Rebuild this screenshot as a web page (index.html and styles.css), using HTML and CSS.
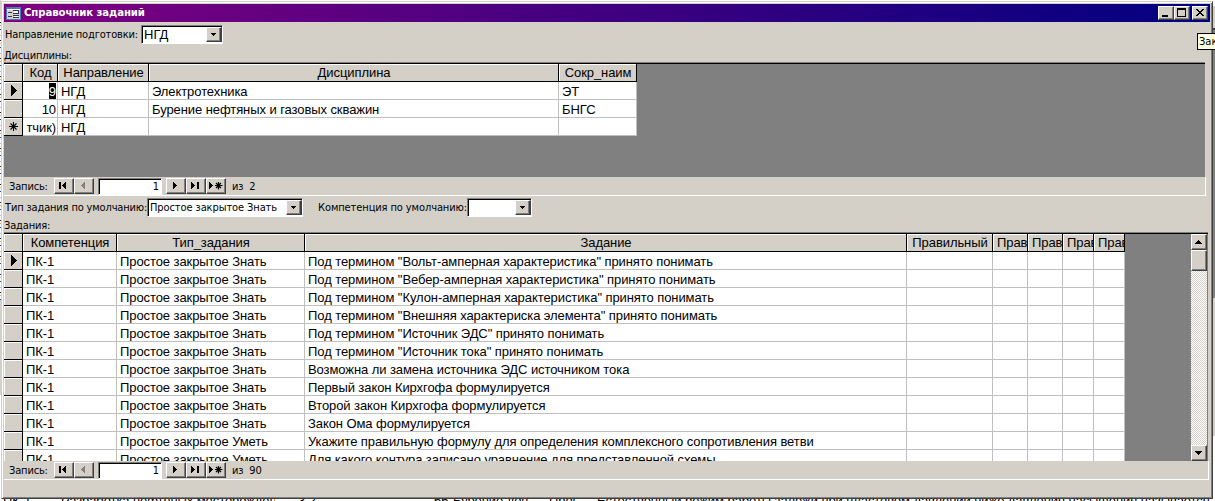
FILE: index.html
```
<!DOCTYPE html>
<html lang="ru"><head><meta charset="utf-8"><title>Справочник заданий</title>
<link rel="stylesheet" href="styles.css"></head>
<body>
<div class="desk">
<div class="under"><span class="u1">ПК-1</span><span class="u2">Разработка нефтяных месторождений</span><span class="u3">3.2</span><span class="u4">66</span><span class="u5">Бурение доп</span><span class="u6">Прог</span><span class="u7">Естественный режим работы залежи при пластовом давлении ниже давления насыщения называется</span></div>
<div class="ledge"></div>
<div class="edge"></div>
<div class="window">
 <div class="titlebar">
  <svg class="appicon" width="15" height="13" viewBox="0 0 15 13" shape-rendering="crispEdges"><path fill="#d4d0c8" d="M0 0h15v13H0z"/><path fill="#4a7ab8" d="M0 0h15v2H0zM0 2h1v11H0zM14 2h1v11h-1zM1 12h13v1H1z"/><path fill="#fff" d="M1 2h13v1H1zM8 4h4v2H8zM8 8h4v2H8z"/><path fill="#335" d="M2 5h4v1H2zM2 9h4v1H2zM7 3h6v1H7zM12 4h1v3h-1zM7 6h5v1H7zM7 8h6v1H7zM7 10h6v1H7z"/></svg>
  <span class="title">Справочник заданий</span>
  <div class="btn wb"><svg width="16" height="14" shape-rendering="crispEdges"><path d="M4 9h6v2H4z"/></svg></div>
  <div class="btn wb"><svg width="16" height="14" shape-rendering="crispEdges"><path fill-rule="evenodd" d="M3 2h9v9H3zM4 4v6h7V4z"/></svg></div>
  <div class="btn wb close"><svg width="16" height="14" shape-rendering="crispEdges"><path d="M4 3h2v1h1v1h2V4h1V3h2v1h-1v1h-1v1H9v1h1v1h1v1h1v1h-2V9H9V8H7v1H6v1H4V9h1V8h1V7h1V6H6V5H5V4H4z"/></svg></div>
 </div>
 <div class="row1"><span class="lbl l1">Направление подготовки:</span>
  <div class="combo c1"><span class="ctext big">НГД</span><div class="btn drop"><svg width="15" height="14" shape-rendering="crispEdges"><path d="M5 6h5v1H9v1H8v1H7V8H6V7H5z"/></svg></div></div></div>
 <div class="cap cap1"><span class="l2">Дисциплины:</span></div>
 <div class="sub sub1">
  <div class="grid g1">
   <div class="h"></div><div class="h"><span>Код</span></div><div class="h"><span>Направление</span></div><div class="h"><span>Дисциплина</span></div><div class="h"><span>Сокр_наим</span></div>
   <div class="s"><svg width="18" height="17" shape-rendering="crispEdges"><path d="M7 3h1v1h1v1h1v1h1v1h1v1h1v1h-1v1h-1v1h-1v1H9v1H8v1H7z"/></svg></div><div class="c r"><span class="sel">9</span></div><div class="c">НГД</div><div class="c">Электротехника</div><div class="c">ЭТ</div>
   <div class="s"></div><div class="c r">10</div><div class="c">НГД</div><div class="c">Бурение нефтяных и газовых скважин</div><div class="c">БНГС</div>
   <div class="s"><svg width="18" height="17"><path stroke="#000" stroke-width="1.1" d="M9.5 4v9M5 8.500h9M6.500 5.500l6 6M12.500 5.500l-6 6"/></svg></div><div class="c r">тчик)</div><div class="c">НГД</div><div class="c"></div><div class="c"></div>
  </div>
 </div>
 <div class="nav nav1">
  <span class="navl">Запись:</span>
  <div class="btn nb"><svg width="20" height="16" shape-rendering="crispEdges"><path d="M5 4h2v7H5zM12 4v7h-1v-1h-1V9H9V8H8V7h1V6h1V5h1V4z"/></svg></div><div class="btn nb"><svg width="20" height="16" shape-rendering="crispEdges"><path fill="#808080" d="M11 4v7h-1v-1H9V9H8V8H7V7h1V6h1V5h1V4z"/></svg></div>
  <div class="field">1</div>
  <div class="btn nb"><svg width="20" height="16" shape-rendering="crispEdges"><path d="M7 4v7h1v-1h1V9h1V8h1V7h-1V6H9V5H8V4z"/></svg></div><div class="btn nb"><svg width="20" height="16" shape-rendering="crispEdges"><path d="M5 4v7h1v-1h1V9h1V8h1V7H8V6H7V5H6V4zM11 4h2v7h-2z"/></svg></div><div class="btn nb"><svg width="20" height="16"><path shape-rendering="crispEdges" d="M3 4v7h1v-1h1V9h1V8h1V7H6V6H5V5H4V4z"/><path stroke="#000" stroke-width="1.200" d="M12.500 4v7.500M9 7.500h7.500M10 5l5 5M15 5l-5 5"/></svg></div>
  <span class="of">из&nbsp; 2</span>
 </div>
 <div class="row2"><span class="lbl l3">Тип задания по умолчанию:</span>
  <div class="combo c2"><span class="ctext small">Простое закрытое Знать</span><div class="btn drop"><svg width="15" height="14" shape-rendering="crispEdges"><path d="M5 6h5v1H9v1H8v1H7V8H6V7H5z"/></svg></div></div>
  <span class="lbl l4">Компетенция по умолчанию:</span>
  <div class="combo c3"><span class="ctext"></span><div class="btn drop"><svg width="15" height="14" shape-rendering="crispEdges"><path d="M5 6h5v1H9v1H8v1H7V8H6V7H5z"/></svg></div></div></div>
 <div class="cap cap2"><span class="l5">Задания:</span></div>
 <div class="sub sub2">
  <div class="grid g2">
   <div class="h"></div><div class="h"><span>Компетенция</span></div><div class="h"><span>Тип_задания</span></div><div class="h"><span>Задание</span></div><div class="h"><span>Правильный</span></div><div class="h cut"><span>Прав</span></div><div class="h cut"><span>Прав</span></div><div class="h cut"><span>Прав</span></div><div class="h cut"><span>Прав</span></div>
   <div class="s"><svg width="18" height="17" shape-rendering="crispEdges"><path d="M7 3h1v1h1v1h1v1h1v1h1v1h1v1h-1v1h-1v1h-1v1H9v1H8v1H7z"/></svg></div><div class="c">ПК-1</div><div class="c">Простое закрытое Знать</div><div class="c">Под термином "Вольт-амперная характеристика" принято понимать</div><div class="c"></div><div class="c"></div><div class="c"></div><div class="c"></div><div class="c"></div>
   <div class="s"></div><div class="c">ПК-1</div><div class="c">Простое закрытое Знать</div><div class="c">Под термином "Вебер-амперная характеристика" принято понимать</div><div class="c"></div><div class="c"></div><div class="c"></div><div class="c"></div><div class="c"></div>
   <div class="s"></div><div class="c">ПК-1</div><div class="c">Простое закрытое Знать</div><div class="c">Под термином "Кулон-амперная характеристика" принято понимать</div><div class="c"></div><div class="c"></div><div class="c"></div><div class="c"></div><div class="c"></div>
   <div class="s"></div><div class="c">ПК-1</div><div class="c">Простое закрытое Знать</div><div class="c">Под термином "Внешняя характериска элемента" принято понимать</div><div class="c"></div><div class="c"></div><div class="c"></div><div class="c"></div><div class="c"></div>
   <div class="s"></div><div class="c">ПК-1</div><div class="c">Простое закрытое Знать</div><div class="c">Под термином "Источник ЭДС" принято понимать</div><div class="c"></div><div class="c"></div><div class="c"></div><div class="c"></div><div class="c"></div>
   <div class="s"></div><div class="c">ПК-1</div><div class="c">Простое закрытое Знать</div><div class="c">Под термином "Источник тока" принято понимать</div><div class="c"></div><div class="c"></div><div class="c"></div><div class="c"></div><div class="c"></div>
   <div class="s"></div><div class="c">ПК-1</div><div class="c">Простое закрытое Знать</div><div class="c">Возможна ли замена источника ЭДС источником тока</div><div class="c"></div><div class="c"></div><div class="c"></div><div class="c"></div><div class="c"></div>
   <div class="s"></div><div class="c">ПК-1</div><div class="c">Простое закрытое Знать</div><div class="c">Первый закон Кирхгофа формулируется</div><div class="c"></div><div class="c"></div><div class="c"></div><div class="c"></div><div class="c"></div>
   <div class="s"></div><div class="c">ПК-1</div><div class="c">Простое закрытое Знать</div><div class="c">Второй закон Кирхгофа формулируется</div><div class="c"></div><div class="c"></div><div class="c"></div><div class="c"></div><div class="c"></div>
   <div class="s"></div><div class="c">ПК-1</div><div class="c">Простое закрытое Знать</div><div class="c">Закон Ома формулируется</div><div class="c"></div><div class="c"></div><div class="c"></div><div class="c"></div><div class="c"></div>
   <div class="s"></div><div class="c">ПК-1</div><div class="c">Простое закрытое Уметь</div><div class="c">Укажите правильную формулу для определения комплексного сопротивления ветви</div><div class="c"></div><div class="c"></div><div class="c"></div><div class="c"></div><div class="c"></div>
   <div class="s"></div><div class="c">ПК-1</div><div class="c">Простое закрытое Уметь</div><div class="c">Для какого контура записано уравнение для представленной схемы</div><div class="c"></div><div class="c"></div><div class="c"></div><div class="c"></div><div class="c"></div>
  </div>
  <div class="scroll"><div class="btn sb"><svg width="16" height="16" shape-rendering="crispEdges"><path d="M7 6h1v1h1v1h1v1h1v1H4V9h1V8h1V7h1z"/></svg></div><div class="btn thumb"></div><div class="track"></div><div class="btn sb"><svg width="16" height="15" shape-rendering="crispEdges"><path d="M4 6h7v1h-1v1H9v1H8v1H7V9H6V8H5V7H4z"/></svg></div></div>
 </div>
 <div class="nav nav2">
  <span class="navl">Запись:</span>
  <div class="btn nb"><svg width="20" height="16" shape-rendering="crispEdges"><path d="M5 4h2v7H5zM12 4v7h-1v-1h-1V9H9V8H8V7h1V6h1V5h1V4z"/></svg></div><div class="btn nb"><svg width="20" height="16" shape-rendering="crispEdges"><path fill="#808080" d="M11 4v7h-1v-1H9V9H8V8H7V7h1V6h1V5h1V4z"/></svg></div>
  <div class="field">1</div>
  <div class="btn nb"><svg width="20" height="16" shape-rendering="crispEdges"><path d="M7 4v7h1v-1h1V9h1V8h1V7h-1V6H9V5H8V4z"/></svg></div><div class="btn nb"><svg width="20" height="16" shape-rendering="crispEdges"><path d="M5 4v7h1v-1h1V9h1V8h1V7H8V6H7V5H6V4zM11 4h2v7h-2z"/></svg></div><div class="btn nb"><svg width="20" height="16"><path shape-rendering="crispEdges" d="M3 4v7h1v-1h1V9h1V8h1V7H6V6H5V5H4V4z"/><path stroke="#000" stroke-width="1.200" d="M12.500 4v7.500M9 7.500h7.500M10 5l5 5M15 5l-5 5"/></svg></div>
  <span class="of">из&nbsp; 90</span>
 </div>
</div>
<div class="tip">Зак</div>
</div>
</body></html>
```
FILE: styles.css
```
*{box-sizing:border-box}
body{margin:0;background:#fff;font-family:"Liberation Sans",sans-serif;color:#000}
svg{display:block}
.desk{position:relative;width:1215px;height:501px;overflow:hidden;background:#fff}
.under{position:absolute;left:0;top:494px;width:1215px;height:16px;font-size:13px;letter-spacing:-.08px;line-height:14px;white-space:nowrap}
.under span{position:absolute;top:0;overflow:hidden}
.u1{left:3px}.u2{left:61px;width:214px}.u3{left:298px}.u4{left:434px}.u5{left:453px}.u6{left:549px}.u7{left:597px}
.ledge{position:absolute;left:0;top:0;width:1px;height:501px;background:linear-gradient(#d4d0c8 0 19px,transparent 19px 300px,#d4d0c8 300px 395px,#fff 395px),repeating-linear-gradient(#fff 0 4px,#222 4px 5px,#fff 5px 7px,#e0b060 7px 8px,#fff 8px 11px,#225090 11px 12px,#fff 12px 17px,#c0c0c0 17px 18px)}
.edge{position:absolute;left:1213px;top:0;width:2px;height:501px;background:linear-gradient(#fff 0 6px,#d4d0c8 6px 28px,#404040 28px 30px,#808080 30px 298px,#d4d0c8 298px 436px,#fff 436px)}
.window{position:absolute;left:1px;top:1px;width:1212px;height:498px;background:#d4d0c8;border:1px solid;border-color:#d4d0c8 #404040 #404040 #d4d0c8;box-shadow:inset 1px 1px #fff,inset -1px -1px #808080;padding:2px}
.titlebar{width:1206px;height:18px;background:linear-gradient(90deg,#800080,#000080);display:flex;align-items:center;padding:0 2px}
.appicon{flex:none}
.title{flex:1;margin-left:3px;color:#fff;font:bold 11.3px/18px "DejaVu Sans Condensed","DejaVu Sans",sans-serif;font-stretch:condensed;letter-spacing:-.1px;white-space:nowrap}
.btn{flex:none;background:#d4d0c8;border:1px solid;border-color:#fff #404040 #404040 #fff;box-shadow:inset -1px -1px #808080;overflow:hidden}
.btn svg{margin:-1px}
.wb{width:16px;height:14px}
.close{margin-left:2px}
.row1{height:28px;display:flex;padding:3px 0 0 1px}
.lbl,.cap,.nav,.small{font-family:"DejaVu Sans Condensed","DejaVu Sans",sans-serif;font-stretch:condensed;font-size:11px;letter-spacing:-.16px;white-space:nowrap}
.lbl{line-height:19px;flex:none}
.l1{width:136px}
.l3{width:142px}
.l4{width:149px;margin-left:15px;letter-spacing:-.1px}
.combo{height:19px;display:flex;background:#fff;border:1px solid;border-color:#808080 #fff #fff #808080;box-shadow:inset 1px 1px #000;padding:1px 0 0 1px}
.c1{width:82px}.c2{width:156px}.c3{width:65px}
.ctext{flex:1;white-space:nowrap;line-height:15px;padding-left:1px}
.small{letter-spacing:-.1px}
.big{font-size:13px}
.drop{width:16px;height:15px;border-right:2px solid #404040}
.cap{height:12px;line-height:12px;overflow:visible}
.sub{border-top:1px solid #808080;box-shadow:inset 0 1px #000;padding-top:1px;background:#808080}
.sub1{width:1201px;height:115px}
.sub2{width:1204px;height:229px;overflow:hidden;display:flex;justify-content:space-between;padding-right:1px}
.grid{display:grid;font-size:13px;letter-spacing:-.08px}
.g1{width:633px;grid-template-columns:19px 35px 91px 410px 78px}
.g2{width:1121px;height:234px;grid-template-columns:19px 94px 188px 602px 86px 35px 35px 31px 31px}
.grid>div{height:18px;white-space:nowrap;overflow:hidden;line-height:19px}
.grid>.h{background:#d4d0c8;border:solid #000;border-width:0 1px 1px 0;box-shadow:inset 1px 1px #fff;text-align:center;padding-left:1px;line-height:18px}
.grid>.cut{text-align:left;padding-left:4px}
.s{background:#d4d0c8;border:solid #000;border-width:0 1px 1px 0;box-shadow:inset 1px 1px #fff}
.c{background:#fff;border:solid #c0c0c0;border-width:0 1px 1px 0;padding-left:3px}
.r{text-align:right;padding-right:1px}
.sel{background:#000;color:#fff;display:inline-block;height:16px;line-height:18px;vertical-align:top;margin-top:1px}
.scroll{width:16px;height:227px;display:flex;flex-direction:column}
.sb{width:16px;height:16px}
.thumb{width:16px;height:21px}
.track{flex:1;background:repeating-conic-gradient(#fff 0 25%,#d4d0c8 0 50%) 0 0/2px 2px}
.nav{height:19px;display:flex;border-bottom:1px solid #fff;border-right:1px solid #fff;padding:1px 0 0 5px;line-height:18px}
.nav1{width:1202px}.nav2{width:1205px}
.navl{width:45px}
.nb{width:20px;height:16px}
.field{width:64px;height:17px;margin:0 4px;background:#fff;border:1px solid;border-color:#808080 #fff #fff #808080;box-shadow:inset 1px 1px #000;text-align:right;padding-right:2px;line-height:16px}
.of{margin-left:6px}
.row2{height:23px;display:flex;padding:2px 0 0 1px}
.cap2{height:13px;line-height:13px}
.tip{position:absolute;left:1197px;top:33px;width:30px;height:17px;border:1px solid #000;background:#ffffe1;font:11px/16px "DejaVu Sans Condensed","DejaVu Sans",sans-serif;padding-left:1px;overflow:hidden}
```
